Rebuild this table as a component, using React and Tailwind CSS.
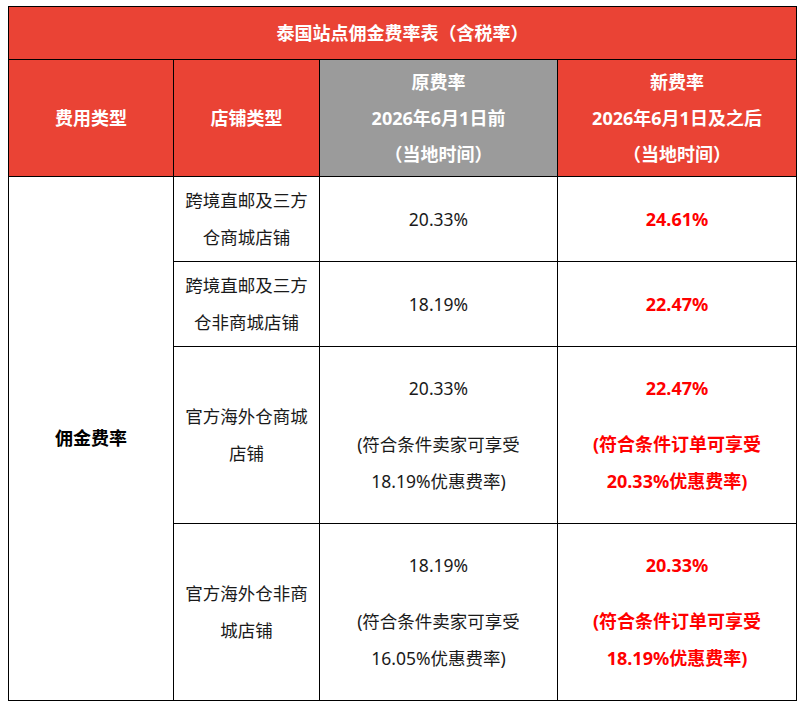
import React from 'react';

const font = { fontFamily: '"Noto Sans", "Noto Sans CJK SC", sans-serif' };

const rows = [
  {
    shop: ['跨境直邮及三方', '仓商城店铺'],
    oldRate: '20.33%',
    newRate: '24.61%',
    h: 'h-[85px]',
  },
  {
    shop: ['跨境直邮及三方', '仓非商城店铺'],
    oldRate: '18.19%',
    newRate: '22.47%',
    h: 'h-[85px]',
  },
  {
    shop: ['官方海外仓商城', '店铺'],
    oldRate: '20.33%',
    oldNote: ['(符合条件卖家可享受', '18.19%优惠费率)'],
    newRate: '22.47%',
    newNote: ['(符合条件订单可享受', '20.33%优惠费率)'],
    h: 'h-[177px]',
  },
  {
    shop: ['官方海外仓非商', '城店铺'],
    oldRate: '18.19%',
    oldNote: ['(符合条件卖家可享受', '16.05%优惠费率)'],
    newRate: '20.33%',
    newNote: ['(符合条件订单可享受', '18.19%优惠费率)'],
    h: 'h-[177px]',
  },
];

const Lines = ({ lines }) => lines.map((l, i) => <div key={i}>{l}</div>);

export default function App() {
  return (
    <div className="min-h-screen bg-white pt-[6px] pl-[8px]" style={font}>
      <table className="border-collapse table-fixed w-[788px] text-[17.5px] text-center">
        <colgroup>
          <col className="w-[165px]" />
          <col className="w-[146px]" />
          <col className="w-[238px]" />
          <col className="w-[239px]" />
        </colgroup>
        <thead>
          <tr className="h-[53px]">
            <th colSpan={4} className="border border-black bg-[#ea4335] text-white font-bold text-[18px]">
              泰国站点佣金费率表（含税率）
            </th>
          </tr>
          <tr className="h-[117px] text-white font-bold text-[18px] leading-[36px]">
            <th className="border border-black bg-[#ea4335]">费用类型</th>
            <th className="border border-black bg-[#ea4335]">店铺类型</th>
            <th className="border border-black bg-[#9b9b9b]">
              <div>原费率</div>
              <div>2026年6月1日前</div>
              <div>（当地时间）</div>
            </th>
            <th className="border border-black bg-[#ea4335]">
              <div>新费率</div>
              <div>2026年6月1日及之后</div>
              <div>（当地时间）</div>
            </th>
          </tr>
        </thead>
        <tbody className="leading-[37px] text-[#1a1a1a]">
          {rows.map((r, i) => (
            <tr key={i} className={r.h}>
              {i === 0 && (
                <td rowSpan={4} className="border border-black font-bold text-[18px] text-black">
                  佣金费率
                </td>
              )}
              <td className="border border-black">
                <Lines lines={r.shop} />
              </td>
              <td className="border border-black">
                <div>{r.oldRate}</div>
                {r.oldNote && (
                  <div className="mt-[19px]">
                    <Lines lines={r.oldNote} />
                  </div>
                )}
              </td>
              <td className="border border-black font-bold text-[18px] text-[#ff0000]">
                <div>{r.newRate}</div>
                {r.newNote && (
                  <div className="mt-[19px]">
                    <Lines lines={r.newNote} />
                  </div>
                )}
              </td>
            </tr>
          ))}
        </tbody>
      </table>
    </div>
  );
}
